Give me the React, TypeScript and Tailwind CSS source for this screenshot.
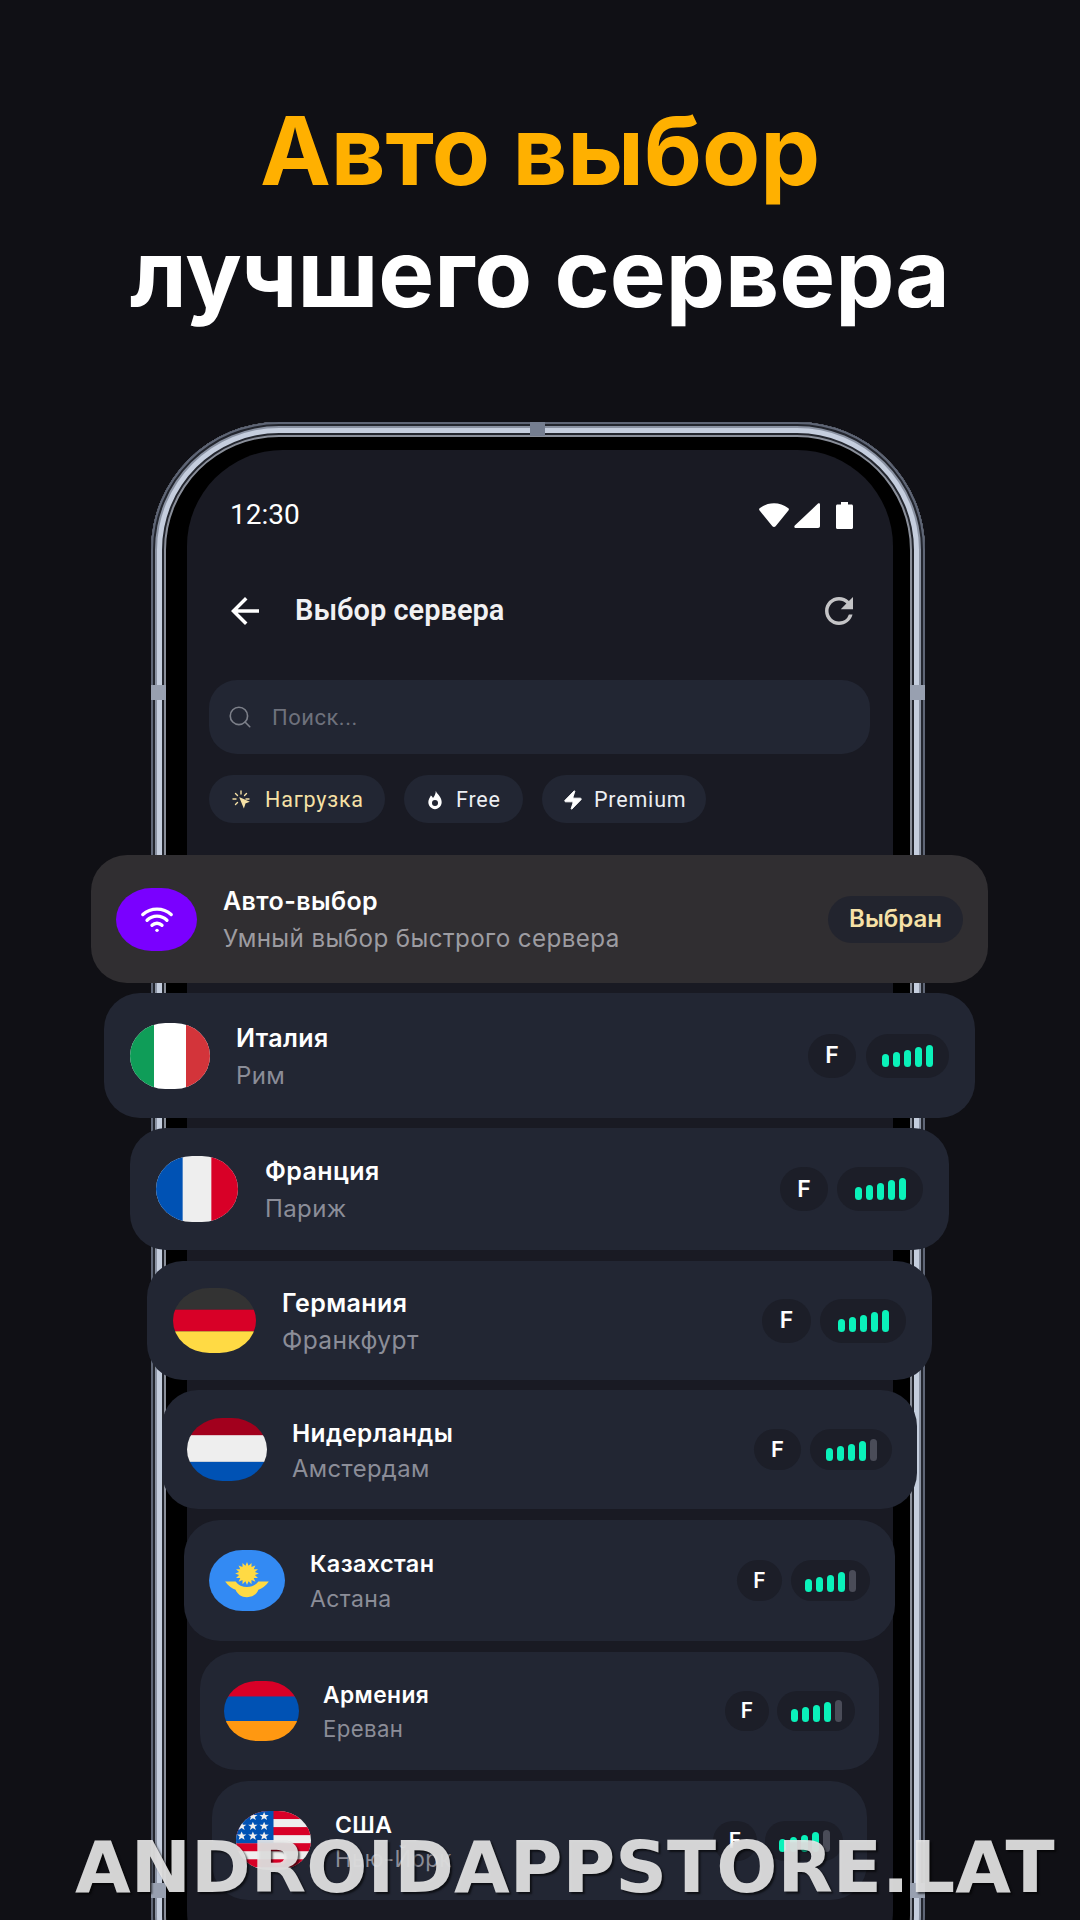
import { Search, Wifi, Zap } from 'lucide-react'

// ── Server rows, every offset is per row because the list fans out ──
const ROWS = [
  {
    name: 'Италия', city: 'Рим', flag: 'it', bars: 5,
    box: 'mt-[10px] ml-[-83px] w-[871px] h-[125px] pl-[26px] pr-[26px]',
    icon: 'w-[80px] h-[66px] mr-[26px]', name_c: 'text-[25px] leading-[30px]', city_c: 'text-[24px] leading-[30px] mt-[8px]',
    f: 'w-[48px] h-[44px] mr-[10px] text-[23px]', sig: 'w-[83px] h-[44px]',
  },
  {
    name: 'Франция', city: 'Париж', flag: 'fr', bars: 5,
    box: 'mt-[10px] ml-[-57px] w-[819px] h-[122px] pl-[26px] pr-[26px]',
    icon: 'w-[82px] h-[66px] mr-[27px]', name_c: 'text-[25px] leading-[30px]', city_c: 'text-[24px] leading-[30px] mt-[8px]',
    f: 'w-[48px] h-[44px] mr-[9px] text-[23px]', sig: 'w-[86px] h-[44px]',
  },
  {
    name: 'Германия', city: 'Франкфурт', flag: 'de', bars: 5,
    box: 'mt-[11px] ml-[-40px] w-[785px] h-[119px] pl-[26px] pr-[26px]',
    icon: 'w-[83px] h-[65px] mr-[26px]', name_c: 'text-[25px] leading-[30px]', city_c: 'text-[24.5px] leading-[30px] mt-[7px]',
    f: 'w-[49px] h-[44px] mr-[9px] text-[23px]', sig: 'w-[86px] h-[44px]',
  },
  {
    name: 'Нидерланды', city: 'Амстердам', flag: 'nl', bars: 4,
    box: 'mt-[10px] ml-[-25px] w-[755px] h-[119px] pl-[25px] pr-[25px]',
    icon: 'w-[80px] h-[63px] mr-[25px]', name_c: 'text-[24.4px] leading-[30px]', city_c: 'text-[23.8px] leading-[30px] mt-[6px]',
    f: 'w-[47px] h-[41px] mr-[9px] text-[22px]', sig: 'w-[82px] h-[41px]',
  },
  {
    name: 'Казахстан', city: 'Астана', flag: 'kz', bars: 4,
    box: 'mt-[11px] ml-[-3px] w-[711px] h-[121px] pl-[25px] pr-[25px]',
    icon: 'w-[76px] h-[61px] mr-[25px]', name_c: 'text-[23.4px] leading-[28px]', city_c: 'text-[23px] leading-[28px] mt-[7px]',
    f: 'w-[45px] h-[41px] mr-[9px] text-[21px]', sig: 'w-[79px] h-[41px]',
  },
  {
    name: 'Армения', city: 'Ереван', flag: 'am', bars: 4,
    box: 'mt-[11px] ml-[13px] w-[679px] h-[118px] pl-[24px] pr-[24px]',
    icon: 'w-[75px] h-[60px] mr-[24px]', name_c: 'text-[22.8px] leading-[28px]', city_c: 'text-[22.2px] leading-[28px] mt-[6px]',
    f: 'w-[44px] h-[40px] mr-[8px] text-[21px]', sig: 'w-[78px] h-[40px]',
  },
  {
    name: 'США', city: 'Нью-Йорк', flag: 'us', bars: 4,
    box: 'mt-[11px] ml-[25px] w-[655px] h-[119px] pl-[24px] pr-[24px]',
    icon: 'w-[75px] h-[59px] mr-[24px]', name_c: 'text-[23px] leading-[28px]', city_c: 'text-[22.2px] leading-[28px] mt-[6px]',
    f: 'w-[44px] h-[40px] mr-[8px] text-[21px]', sig: 'w-[78px] h-[40px]',
  },
]

const BAR_HEIGHTS = ['h-[13px]', 'h-[15px]', 'h-[17px]', 'h-[20px]', 'h-[22px]']

// 16 spike sun for the Kazakhstan flag
const SUN_POINTS = Array.from({ length: 32 }, (_, i) => {
  const r = i % 2 === 0 ? 12.5 : 8.5
  const a = (i * Math.PI) / 16
  return `${(40 + r * Math.sin(a)).toFixed(2)},${(25.5 - r * Math.cos(a)).toFixed(2)}`
}).join(' ')

function Flag({ code }: { code: string }) {
  return (
    <svg viewBox="0 0 80 66" preserveAspectRatio="none" className="w-full h-full block">
      {code === 'it' && (
        <>
          <rect width="80" height="66" fill="#fff" />
          <rect width="24" height="66" fill="#0f9d58" />
          <rect x="56" width="24" height="66" fill="#d3343a" />
        </>
      )}
      {code === 'fr' && (
        <>
          <rect width="80" height="66" fill="#eeeeee" />
          <rect width="26" height="66" fill="#0052b4" />
          <rect x="54" width="26" height="66" fill="#d80027" />
        </>
      )}
      {code === 'de' && (
        <>
          <rect width="80" height="22" fill="#333333" />
          <rect y="22" width="80" height="22" fill="#d80027" />
          <rect y="44" width="80" height="22" fill="#ffda44" />
        </>
      )}
      {code === 'nl' && (
        <>
          <rect width="80" height="20" fill="#a2001d" />
          <rect y="18" width="80" height="28" fill="#eeeeee" />
          <rect y="46" width="80" height="20" fill="#0052b4" />
        </>
      )}
      {code === 'kz' && (
        <>
          <rect width="80" height="66" fill="#338af3" />
          <polygon points={SUN_POINTS} fill="#ffda44" />
          <path d="M17 34 L28 34 C31 38 35 40 40 40 C45 40 49 38 52 34 L63 34 C60 39 55 42 52 43 C50 48 46 51 40 51 C34 51 30 48 28 43 C25 42 20 39 17 34 Z" fill="#ffda44" />
        </>
      )}
      {code === 'am' && (
        <>
          <rect width="80" height="18" fill="#d80027" />
          <rect y="17" width="80" height="27" fill="#0052b4" />
          <rect y="44" width="80" height="22" fill="#ff9811" />
        </>
      )}
      {code === 'us' && (
        <>
          <rect width="80" height="66" fill="#eeeeee" />
          {[0, 18, 36, 54].map(y => (
            <rect key={y} y={y} width="80" height="9" fill="#d80027" />
          ))}
          <rect width="40" height="36" fill="#0052b4" />
          {[6, 17, 28].map(y =>
            [6, 18, 30].map(x => (
              <polygon
                key={`${x}-${y}`}
                transform={`translate(${x} ${y})`}
                points="0,-5 1.4,-1.6 5,-1.6 2.1,0.6 3.2,4.2 0,2.1 -3.2,4.2 -2.1,0.6 -5,-1.6 -1.4,-1.6"
                fill="#eeeeee"
              />
            )),
          )}
        </>
      )}
    </svg>
  )
}

function SignalBars({ active }: { active: number }) {
  return (
    <div className="flex items-end gap-[4px]">
      {BAR_HEIGHTS.map((h, i) => (
        <span key={h} className={`w-[7px] rounded-full ${h} ${i < active ? 'bg-[#0af2ba]' : 'bg-[#4a4c58]'}`} />
      ))}
    </div>
  )
}

export default function App() {
  return (
    <div className="relative w-[1080px] h-[1920px] overflow-hidden bg-[#101015] font-['Inter',sans-serif]">
      {/* ── Headline ─────────────────────────────── */}
      <h1 className="h-[422px] pt-[89px] text-center font-bold text-[94px] leading-[123px] text-white">
        <span className="block text-[95px] text-[#ffb000]">Авто выбор</span>
        <span className="block">лучшего сервера</span>
      </h1>

      {/* ── Phone ────────────────────────────────── */}
      <div className="relative ml-[151px] w-[774px] h-[1620px] pt-[28px] pl-[36px] bg-black rounded-[128px] shadow-[inset_0_0_0_2px_#5f6676,inset_0_0_0_4px_#23262e,inset_0_0_0_6px_#8a92a2,inset_0_0_0_11px_#c5cede,inset_0_0_0_13px_#23262e,inset_0_0_0_15px_#8a8f9a]">
        <span className="absolute top-0 left-[379px] w-[15px] h-[14px] bg-[#757e90]" />
        <span className="absolute top-[263px] left-0 w-[15px] h-[15px] bg-[#98a0b0]" />
        <span className="absolute top-[263px] right-0 w-[15px] h-[15px] bg-[#98a0b0]" />
        <span className="absolute top-[1461px] left-0 w-[15px] h-[15px] bg-[#98a0b0]" />
        <span className="absolute top-[1461px] right-0 w-[15px] h-[15px] bg-[#98a0b0]" />

        <div className="w-[706px] h-[1556px] rounded-[96px] bg-[#191a23] overflow-visible">
          {/* status bar */}
          <div className="pt-[50px] pl-[43px] pr-[40px] flex items-center justify-between font-['Roboto',sans-serif] text-white">
            <span className="text-[28px] leading-[30px]">12:30</span>
            <div className="flex items-center">
              <svg viewBox="0 0 30 24" className="w-[30px] h-[24px] mr-[5px]" fill="#fff">
                <path d="M13.4 23.2 L0.6 7.6 C-0.2 6.6 0 5.6 1 5 C9 -1.4 21 -1.4 29 5 C30 5.6 30.2 6.6 29.4 7.6 L16.6 23.2 C15.8 24.2 14.2 24.2 13.4 23.2 Z" />
              </svg>
              <svg viewBox="0 0 26 25" className="w-[26px] h-[25px] mr-[16px]" fill="#fff">
                <path d="M24 0.6 C25 -0.2 26 0.4 26 1.6 V23 C26 24.2 25.2 25 24 25 H2 C0.4 25 -0.2 23.6 0.8 22.6 Z" />
              </svg>
              <svg viewBox="0 0 17 27" className="w-[17px] h-[27px]" fill="#fff">
                <path d="M5 0 H12 V2.5 H15.5 C16.4 2.5 17 3.1 17 4 V25.5 C17 26.4 16.4 27 15.5 27 H1.5 C0.6 27 0 26.4 0 25.5 V4 C0 3.1 0.6 2.5 1.5 2.5 H5 Z" />
              </svg>
            </div>
          </div>

          {/* header */}
          <div className="mt-[61px] h-[40px] pl-[37px] pr-[33px] flex items-center font-['Roboto',sans-serif]">
            <svg viewBox="0 0 24 24" className="w-[42px] h-[42px] mr-[29px]" fill="#fff">
              <path d="M20 11H7.83l5.59-5.59L12 4l-8 8 8 8 1.41-1.41L7.83 13H20v-2z" />
            </svg>
            <span className="text-[29px] font-semibold text-[#f1f1f3]">Выбор сервера</span>
            <svg viewBox="0 0 24 24" className="w-[42px] h-[42px] ml-auto" fill="#c4c4c6">
              <path d="M17.65 6.35A7.958 7.958 0 0 0 12 4c-4.42 0-7.99 3.58-7.99 8s3.57 8 7.99 8c3.73 0 6.84-2.55 7.73-6h-2.08A5.99 5.99 0 0 1 12 18c-3.31 0-6-2.69-6-6s2.69-6 6-6c1.66 0 3.14.69 4.22 1.78L13 11h7V4l-2.35 2.35z" />
            </svg>
          </div>

          {/* search */}
          <div className="mt-[49px] ml-[22px] w-[661px] h-[74px] rounded-[28px] bg-[#222633] flex items-center pl-[18px]">
            <Search className="w-[26px] h-[26px] text-[#7d808a] mr-[19px]" strokeWidth={1.5} />
            <span className="text-[22px] text-[#6e717c] font-['Roboto',sans-serif] tracking-[0.5px]">Поиск...</span>
          </div>

          {/* filter chips */}
          <div className="mt-[21px] ml-[22px] flex gap-[19px] text-[21.5px] font-['Roboto',sans-serif] tracking-[0.8px] text-[#eceef2]">
            <div className="w-[176px] h-[48px] pt-[2px] rounded-full bg-[#222633] flex items-center pl-[23px] text-[#f6e1a6]">
              <svg viewBox="0 0 20 20" className="w-[20px] h-[20px] mr-[13px]" fill="none" stroke="#f6e1a6" strokeWidth="1.4" strokeLinecap="round">
                <path d="M9 1v3M3.5 3.5l2 2M1 9h3M3.5 14.5l2-2M14.5 3.5l-2 2M17 9h-3" />
                <path d="M8.5 8.5l7.5 3.2-3 1.2-1.2 3.6z" fill="#f6e1a6" />
              </svg>
              Нагрузка
            </div>
            <div className="w-[119px] h-[48px] pt-[2px] rounded-full bg-[#222633] flex items-center pl-[21px]">
              <svg viewBox="0 0 24 24" className="w-[20px] h-[20px] mr-[11px]">
                <path d="M13 1c.5 3.5 7 6.5 7 13.5 0 4.6-3.6 8.5-8 8.5s-8-3.9-8-8.5C4 11 6 9 7 6.5c1.3.8 2.3 2 2.6 3.2C11.5 7.5 13 4.5 13 1z" fill="#fff" />
                <circle cx="12" cy="15.5" r="3.6" fill="#222633" />
              </svg>
              Free
            </div>
            <div className="w-[164px] h-[48px] pt-[2px] rounded-full bg-[#222633] flex items-center pl-[20px]">
              <Zap className="w-[22px] h-[22px] mr-[10px] text-white" fill="#fff" strokeWidth={1} />
              Premium
            </div>
          </div>

          {/* auto choice */}
          <div className="relative mt-[32px] ml-[-96px] w-[897px] h-[128px] rounded-[36px] bg-[#302e31] flex items-center pl-[25px] pr-[25px]">
            <div className="w-[81px] h-[63px] mr-[26px] rounded-[44%/50%] bg-[#7a00ff] flex items-center justify-center">
              <Wifi className="w-[34px] h-[34px] text-white" strokeWidth={2.4} />
            </div>
            <div className="pt-[2px] tracking-[0.4px]">
              <div className="text-[25px] leading-[30px] font-semibold text-white">Авто-выбор</div>
              <div className="text-[24.2px] leading-[30px] mt-[8px] text-[#9d9ca1]">Умный выбор быстрого сервера</div>
            </div>
            <div className="ml-auto w-[135px] h-[47px] rounded-full bg-[#22242e] flex items-center justify-center text-[24px] font-semibold text-[#f6e1a6]">
              Выбран
            </div>
          </div>

          {/* server list */}
          {ROWS.map(row => (
            <div key={row.name} className={`relative rounded-[36px] bg-[#222633] flex items-center ${row.box}`}>
              <div className={`shrink-0 rounded-[44%/50%] overflow-hidden ${row.icon}`}>
                <Flag code={row.flag} />
              </div>
              <div className="pt-[2px] tracking-[0.4px]">
                <div className={`font-semibold text-white ${row.name_c}`}>{row.name}</div>
                <div className={`text-[#8b8d98] ${row.city_c}`}>{row.city}</div>
              </div>
              <div className={`ml-auto rounded-full bg-[#1c1e28] flex items-center justify-center font-semibold text-white ${row.f}`}>
                F
              </div>
              <div className={`rounded-full bg-[#1c1e28] flex items-center justify-center ${row.sig}`}>
                <SignalBars active={row.bars} />
              </div>
            </div>
          ))}
        </div>
      </div>

      {/* ── Watermark ────────────────────────────── */}
      <div className="absolute left-[75px] top-[1824px] whitespace-nowrap font-['DejaVu_Sans',sans-serif] font-bold text-[72px] leading-[86px] text-[#eaeaea]/90 [text-shadow:2px_2px_2px_rgba(0,0,0,0.6)]">
        ANDROIDAPPSTORE.LAT
      </div>
    </div>
  )
}
